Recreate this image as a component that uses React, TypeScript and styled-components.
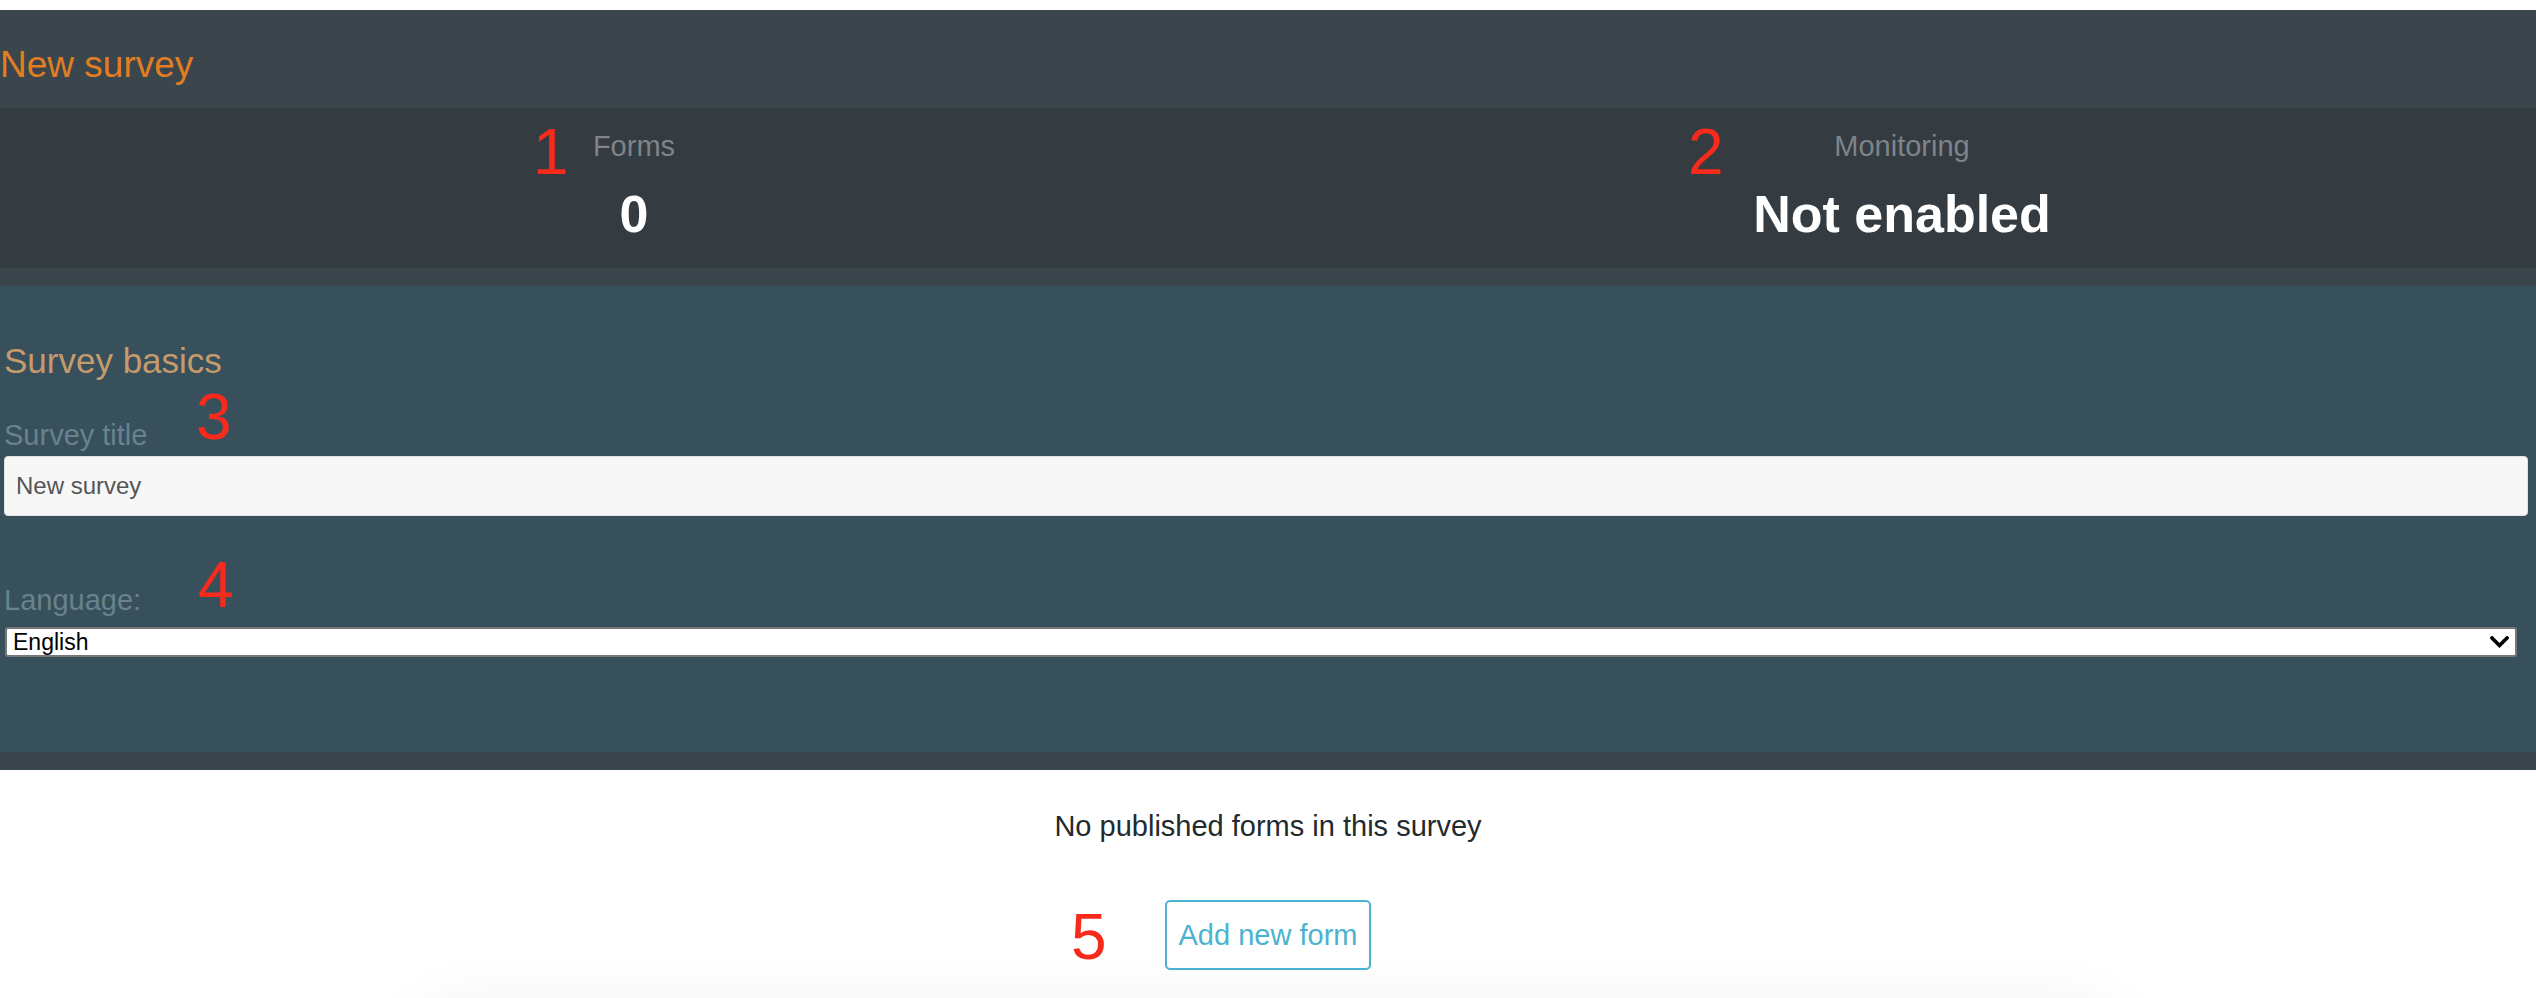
import React from "react";
import styled, { createGlobalStyle } from "styled-components";

const GlobalStyle = createGlobalStyle`
  html, body {
    margin: 0;
    padding: 0;
    background: #ffffff;
    font-family: "Liberation Sans", Arial, Helvetica, sans-serif;
  }
  * {
    box-sizing: border-box;
  }
`;

const Page = styled.div`
  padding-top: 10px;
  overflow: hidden;
`;

const Header = styled.header`
  background-color: #3a464c;
  padding-bottom: 18px;
`;

const TitleBar = styled.div`
  height: 98px;
  padding-top: 37px;
`;

const SurveyName = styled.h1`
  margin: 0;
  font-size: 37px;
  line-height: 36px;
  font-weight: normal;
  color: #e27d22;
`;

const Stats = styled.div`
  position: relative;
  display: grid;
  grid-template-columns: 1fr 1fr;
  height: 160px;
  background-color: #343b41;
`;

const Stat = styled.div`
  display: flex;
  flex-direction: column;
  align-items: center;
  padding-top: 24px;
`;

const StatLabel = styled.div`
  font-size: 29px;
  line-height: 28px;
  color: #7f8488;
`;

const StatValue = styled.div`
  margin-top: 28px;
  font-size: 52px;
  line-height: 52px;
  font-weight: bold;
  color: #ffffff;
`;

const Basics = styled.section`
  position: relative;
  background-color: #37505c;
  padding: 58px 8px 95px 4px;
`;

const SectionTitle = styled.h2`
  margin: 0;
  font-size: 35px;
  line-height: 34px;
  font-weight: normal;
  color: #c69b6c;
`;

const FieldLabel = styled.label<{ $gap: number }>`
  display: block;
  margin-top: ${(p) => p.$gap}px;
  font-size: 29px;
  line-height: 28px;
  color: #69828d;
`;

const TextInput = styled.input`
  display: block;
  width: 100%;
  height: 60px;
  margin-top: 7px;
  padding: 0 11px;
  border: 1px solid #e2e2e2;
  border-radius: 4px;
  background-color: #f7f7f7;
  font-family: "Liberation Sans", Arial, sans-serif;
  font-size: 24px;
  color: #555555;
  outline: none;
`;

const SelectWrap = styled.div`
  position: relative;
  margin: 13px 11px 0 1px;
`;

const Select = styled.select`
  display: block;
  width: 100%;
  height: 30px;
  padding: 0 40px 0 6px;
  border: 2px solid #777777;
  border-radius: 3px;
  background-color: #ffffff;
  appearance: none;
  -webkit-appearance: none;
  font-family: "Liberation Sans", Arial, sans-serif;
  font-size: 23px;
  line-height: 26px;
  color: #000000;
  outline: none;
`;

const Chevron = styled.svg`
  position: absolute;
  right: 8px;
  top: 9px;
  width: 19px;
  height: 12px;
  pointer-events: none;
`;

const FooterBand = styled.div`
  height: 18px;
  background-color: #3a464c;
`;

const FormsArea = styled.section`
  position: relative;
  display: flex;
  flex-direction: column;
  align-items: center;
  padding-top: 42px;
`;

const EmptyText = styled.p`
  margin: 0;
  font-size: 29px;
  line-height: 28px;
  color: #222a2e;
`;

const AddButton = styled.button`
  margin-top: 60px;
  width: 206px;
  height: 70px;
  border: 2px solid #4bb3cf;
  border-radius: 5px;
  background: #ffffff;
  color: #4bb3cf;
  font-family: "Liberation Sans", Arial, sans-serif;
  font-size: 29px;
  cursor: pointer;
`;

const ShadowCard = styled.div`
  width: 1720px;
  height: 200px;
  margin-top: 32px;
  background: #ffffff;
  border-radius: 60px;
  box-shadow: 0 0 60px rgba(0, 0, 0, 0.06);
`;

const Annotation = styled.span<{ $left: number; $top: number }>`
  position: absolute;
  left: ${(p) => p.$left}px;
  top: ${(p) => p.$top}px;
  font-size: 64px;
  line-height: 64px;
  color: #f82a1c;
  pointer-events: none;
`;

export default function App() {
  return (
    <>
      <GlobalStyle />
      <Page>
        <Header>
          <TitleBar>
            <SurveyName>New survey</SurveyName>
          </TitleBar>
          <Stats>
            <Annotation $left={533} $top={12}>1</Annotation>
            <Annotation $left={1688} $top={12}>2</Annotation>
            <Stat>
              <StatLabel>Forms</StatLabel>
              <StatValue>0</StatValue>
            </Stat>
            <Stat>
              <StatLabel>Monitoring</StatLabel>
              <StatValue>Not enabled</StatValue>
            </Stat>
          </Stats>
        </Header>

        <Basics>
          <Annotation $left={196} $top={99}>3</Annotation>
          <Annotation $left={198} $top={267}>4</Annotation>
          <SectionTitle>Survey basics</SectionTitle>
          <FieldLabel $gap={43} htmlFor="survey-title">
            Survey title
          </FieldLabel>
          <TextInput id="survey-title" defaultValue="New survey" />
          <FieldLabel $gap={70} htmlFor="survey-language">
            Language:
          </FieldLabel>
          <SelectWrap>
            <Select id="survey-language" defaultValue="en">
              <option value="en">English</option>
            </Select>
            <Chevron viewBox="0 0 19 12">
              <polyline
                points="2,2 9.5,9.5 17,2"
                fill="none"
                stroke="#000"
                strokeWidth="3.6"
                strokeLinecap="square"
              />
            </Chevron>
          </SelectWrap>
        </Basics>
        <FooterBand />

        <FormsArea>
          <Annotation $left={1071} $top={135}>5</Annotation>
          <EmptyText>No published forms in this survey</EmptyText>
          <AddButton type="button">Add new form</AddButton>
          <ShadowCard />
        </FormsArea>
      </Page>
    </>
  );
}
